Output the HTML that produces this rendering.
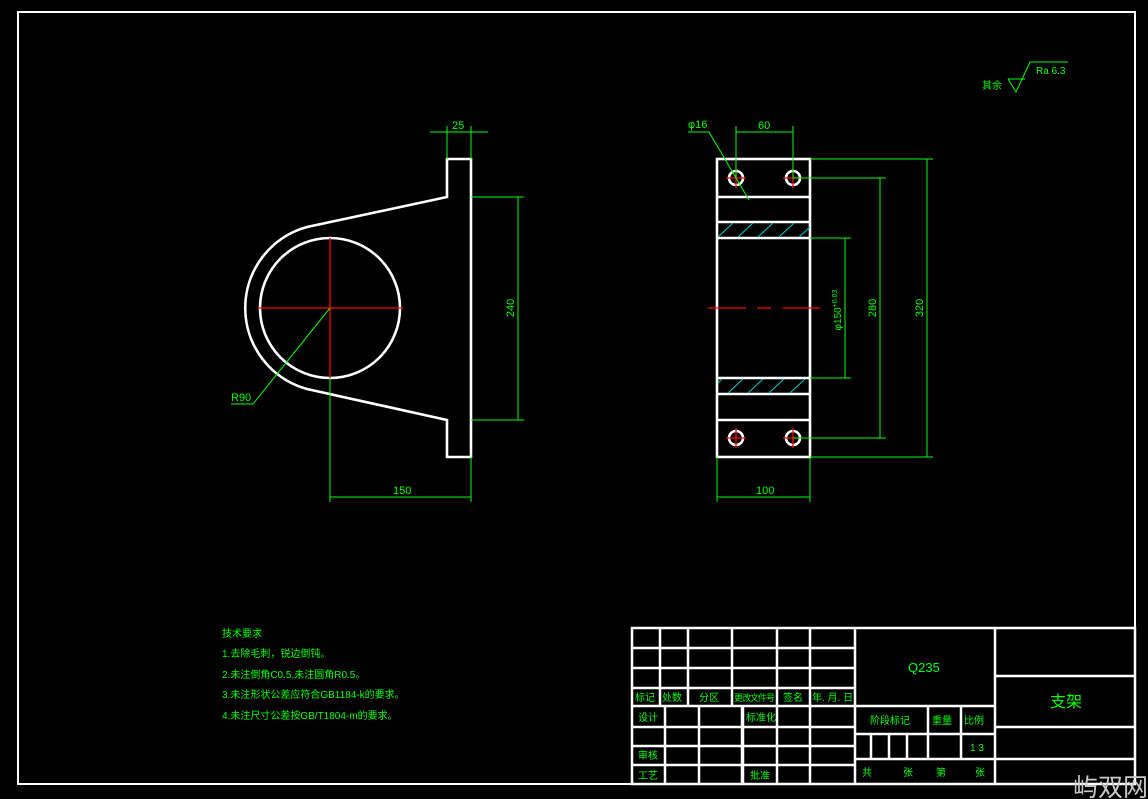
<!DOCTYPE html>
<html><head><meta charset="utf-8"><style>
html,body{margin:0;padding:0;background:#000;}
svg{display:block}
text{font-family:"Liberation Sans Narrow","Liberation Sans","Noto Sans CJK SC",sans-serif;fill:#00ff00}
.c{font-family:"Liberation Sans","Noto Sans CJK SC",sans-serif}
</style></head><body>
<svg width="1148" height="799" viewBox="0 0 1148 799" xmlns="http://www.w3.org/2000/svg">
<rect x="0" y="0" width="1148" height="799" fill="#000"/>
<rect x="18" y="12" width="1117" height="772" fill="none" stroke="#fff" stroke-width="2"/>

<!-- LEFT VIEW -->
<g fill="none" stroke="#fff" stroke-width="2.6">
<path d="M447 159 H471 V457 H447 V420 L307 389 A84 84 0 0 1 307 227 L447 197 Z"/>
<circle cx="330" cy="308" r="70"/>
</g>
<g stroke="#ff0000" stroke-width="1.3">
<line x1="258" y1="308" x2="403" y2="308"/>
<line x1="330" y1="238" x2="330" y2="378"/>
</g>
<g stroke="#00ff00" stroke-width="1" fill="none">
<line x1="447" y1="126" x2="447" y2="159"/><line x1="471" y1="126" x2="471" y2="159"/>
<line x1="430" y1="132" x2="488" y2="132"/>
<line x1="471" y1="197" x2="524" y2="197"/><line x1="471" y1="420" x2="524" y2="420"/>
<line x1="518" y1="197" x2="518" y2="420"/>
<line x1="330" y1="378" x2="330" y2="502"/><line x1="471" y1="457" x2="471" y2="502"/>
<line x1="330" y1="497" x2="471" y2="497"/>
<polyline points="330,308 253,404 231,404"/>
</g>
<text x="452" y="129" font-size="11">25</text>
<text x="393" y="494" font-size="11">150</text>
<text x="231" y="401" font-size="11">R90</text>
<text transform="translate(514,308) rotate(-90)" font-size="11" text-anchor="middle">240</text>

<!-- RIGHT VIEW -->
<g fill="none" stroke="#fff" stroke-width="2.6">
<rect x="717" y="159" width="93" height="298"/>
<line x1="717" y1="197" x2="810" y2="197"/>
<line x1="717" y1="222" x2="810" y2="222"/>
<line x1="717" y1="238" x2="810" y2="238"/>
<line x1="717" y1="378" x2="810" y2="378"/>
<line x1="717" y1="394" x2="810" y2="394"/>
<line x1="717" y1="420" x2="810" y2="420"/>
<circle cx="736" cy="178" r="7"/><circle cx="793" cy="178" r="7"/>
<circle cx="736" cy="438" r="7"/><circle cx="793" cy="438" r="7"/>
</g>
<g stroke="#00cccc" stroke-width="1">
<line x1="718" y1="237" x2="733" y2="223"/><line x1="738" y1="237" x2="753" y2="223"/><line x1="758" y1="237" x2="773" y2="223"/><line x1="779" y1="237" x2="794" y2="223"/><line x1="799" y1="237" x2="810" y2="227"/>
<line x1="718" y1="383" x2="722" y2="379"/><line x1="728" y1="393" x2="743" y2="379"/><line x1="748" y1="393" x2="763" y2="379"/><line x1="769" y1="393" x2="784" y2="379"/><line x1="790" y1="393" x2="805" y2="379"/>
</g>
<g stroke="#ff0000" stroke-width="1.3">
<line x1="708" y1="308" x2="746" y2="308"/><line x1="757" y1="308" x2="771" y2="308"/><line x1="783" y1="308" x2="820" y2="308"/>
<line x1="726" y1="178" x2="746" y2="178"/><line x1="736" y1="168" x2="736" y2="188"/>
<line x1="783" y1="178" x2="803" y2="178"/><line x1="793" y1="168" x2="793" y2="188"/>
<line x1="726" y1="438" x2="746" y2="438"/><line x1="736" y1="428" x2="736" y2="448"/>
<line x1="783" y1="438" x2="803" y2="438"/><line x1="793" y1="428" x2="793" y2="448"/>
</g>
<g stroke="#00ff00" stroke-width="1" fill="none">
<line x1="736" y1="126" x2="736" y2="178"/><line x1="793" y1="126" x2="793" y2="178"/>
<line x1="736" y1="132" x2="793" y2="132"/>
<polyline points="688,132 709,132 749,200"/>
<line x1="810" y1="159" x2="933" y2="159"/><line x1="810" y1="457" x2="933" y2="457"/>
<line x1="927" y1="159" x2="927" y2="457"/>
<line x1="793" y1="178" x2="886" y2="178"/><line x1="793" y1="438" x2="886" y2="438"/>
<line x1="880" y1="178" x2="880" y2="438"/>
<line x1="810" y1="238" x2="851" y2="238"/><line x1="810" y1="378" x2="851" y2="378"/>
<line x1="845" y1="238" x2="845" y2="378"/>
<line x1="717" y1="457" x2="717" y2="502"/><line x1="810" y1="457" x2="810" y2="502"/>
<line x1="717" y1="497" x2="810" y2="497"/>
</g>
<text x="688" y="128" font-size="11">φ16</text>
<text x="758" y="129" font-size="11">60</text>
<text x="756" y="494" font-size="11">100</text>
<text transform="translate(876,308) rotate(-90)" font-size="11" text-anchor="middle">280</text>
<text transform="translate(923,308) rotate(-90)" font-size="11" text-anchor="middle">320</text>
<text transform="translate(841,310) rotate(-90)" font-size="10" text-anchor="middle">φ150<tspan font-size="7" dy="-4">+0.03</tspan></text>

<!-- roughness -->
<g stroke="#00ff00" stroke-width="1" fill="none">
<polyline points="1008,79 1016,92 1030,62 1068,62"/>
<line x1="1008" y1="79" x2="1025" y2="79"/>
</g>
<text x="1036" y="74" font-size="10">Ra 6.3</text>
<text class="c" x="982" y="89" font-size="10">其余</text>

<!-- tech requirements -->
<g class="c" font-size="10">
<text class="c" x="222" y="637">技术要求</text>
<text class="c" x="222" y="657">1.去除毛刺，锐边倒钝。</text>
<text class="c" x="222" y="678">2.未注倒角C0.5,未注圆角R0.5。</text>
<text class="c" x="222" y="698">3.未注形状公差应符合GB1184-k的要求。</text>
<text class="c" x="222" y="719">4.未注尺寸公差按GB/T1804-m的要求。</text>
</g>

<!-- title block -->
<g stroke="#fff" stroke-width="2.5" fill="none">
<rect x="632" y="628" width="503" height="156"/>
<line x1="855" y1="628" x2="855" y2="784"/>
<line x1="995" y1="628" x2="995" y2="784"/>
<line x1="632" y1="648" x2="855" y2="648"/>
<line x1="632" y1="668" x2="855" y2="668"/>
<line x1="632" y1="688" x2="855" y2="688"/>
<line x1="632" y1="706" x2="855" y2="706"/>
<line x1="660" y1="628" x2="660" y2="706"/>
<line x1="688" y1="628" x2="688" y2="706"/>
<line x1="732" y1="628" x2="732" y2="706"/>
<line x1="777" y1="628" x2="777" y2="784"/>
<line x1="810" y1="628" x2="810" y2="784"/>
<line x1="632" y1="727" x2="855" y2="727"/>
<line x1="632" y1="746" x2="855" y2="746"/>
<line x1="632" y1="765" x2="855" y2="765"/>
<line x1="665" y1="706" x2="665" y2="784"/>
<line x1="699" y1="706" x2="699" y2="784"/>
<line x1="742.5" y1="706" x2="742.5" y2="784" stroke-width="3.5"/>
<line x1="855" y1="706" x2="995" y2="706"/>
<line x1="855" y1="734" x2="995" y2="734"/>
<line x1="855" y1="759" x2="995" y2="759"/>
<line x1="928" y1="706" x2="928" y2="759"/>
<line x1="961" y1="706" x2="961" y2="759"/>
<line x1="871" y1="734" x2="871" y2="759"/>
<line x1="889" y1="734" x2="889" y2="759"/>
<line x1="907" y1="734" x2="907" y2="759"/>
<line x1="995" y1="676" x2="1135" y2="676"/>
<line x1="995" y1="727" x2="1135" y2="727"/>
<line x1="995" y1="759" x2="1135" y2="759"/>
</g>
<g class="c" font-size="10">
<text class="c" x="635" y="701">标记</text>
<text class="c" x="662" y="701">处数</text>
<text class="c" x="699" y="701">分区</text>
<text class="c" x="734" y="701" font-size="9" textLength="41">更改文件号</text>
<text class="c" x="783" y="701">签名</text>
<text class="c" x="812" y="701">年. 月. 日</text>
<text class="c" x="638" y="721">设计</text>
<text class="c" x="746" y="721">标准化</text>
<text class="c" x="638" y="759">审核</text>
<text class="c" x="638" y="779">工艺</text>
<text class="c" x="750" y="779">批准</text>
<text class="c" x="870" y="724">阶段标记</text>
<text class="c" x="932" y="724">重量</text>
<text class="c" x="964" y="724">比例</text>
<text x="970" y="751">1 3</text>
<text class="c" x="862" y="776">共</text>
<text class="c" x="903" y="776">张</text>
<text class="c" x="936" y="776">第</text>
<text class="c" x="975" y="776">张</text>
</g>
<text x="908" y="672" font-size="13">Q235</text>
<text class="c" x="1050" y="707" font-size="16">支架</text>

<text class="c" x="1073" y="796" font-size="25" style="fill:#c8c8c8">屿双网</text>
</svg>
</body></html>
